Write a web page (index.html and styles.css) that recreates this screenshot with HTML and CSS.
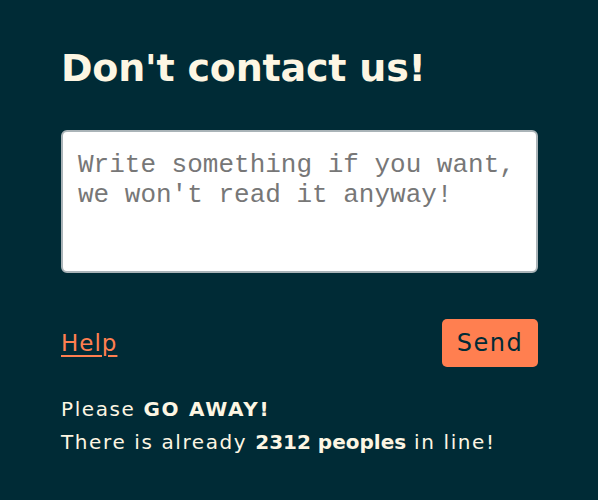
FILE: index.html
```html
<!DOCTYPE html>
<html lang="en">
<head>
<meta charset="utf-8">
<title>Don't contact us!</title>
<link rel="stylesheet" href="styles.css">
</head>
<body>
<main class="page">
  <h1 class="title">Don't contact us!</h1>
  <textarea class="message" placeholder="Write something if you want, we won't read it anyway!"></textarea>
  <div class="actions">
    <a class="help" href="#">Help</a>
    <button class="send" type="button">Send</button>
  </div>
  <div class="notes">
    <p class="note">Please <strong class="shout">GO AWAY!</strong></p>
    <p class="note">There is already <strong>2312 peoples</strong> in line!</p>
  </div>
</main>
</body>
</html>
```

FILE: styles.css
```css
html, body {
  margin: 0;
  padding: 0;
  background: #002b36;
}

body {
  font-family: "DejaVu Sans", "Open Sans", sans-serif;
  color: #fdf6e3;
}

.page {
  display: flex;
  flex-direction: column;
  padding: 44px 60px 0 61px;
  box-sizing: border-box;
  width: 598px;
}

.title {
  margin: 0;
  font-size: 38px;
  line-height: 48px;
  font-weight: 700;
  letter-spacing: -0.2px;
}

.message {
  margin-top: 38px;
  height: 143px;
  box-sizing: border-box;
  width: 100%;
  border: 2px solid #aab4b8;
  border-radius: 6px;
  background: #ffffff;
  padding: 19px 15px;
  font-family: "Liberation Mono", "Courier New", monospace;
  font-size: 26px;
  line-height: 29.5px;
  resize: none;
  color: #333;
}

.message::placeholder {
  color: #777777;
}

.actions {
  margin-top: 46px;
  display: flex;
  justify-content: space-between;
  align-items: center;
  height: 48px;
}

.help {
  color: #ff7f50;
  font-size: 23px;
  letter-spacing: 1px;
  text-decoration: underline;
  text-underline-offset: 4px;
  text-decoration-thickness: 2px;
}

.send {
  height: 48px;
  width: 96px;
  padding: 0;
  border: none;
  border-radius: 5px;
  background: #ff7f50;
  color: #002b36;
  font-family: "DejaVu Sans", "Open Sans", sans-serif;
  font-size: 24px;
  letter-spacing: 1.5px;
}

.notes {
  margin-top: 26px;
}

.note {
  margin: 0;
  font-size: 20px;
  line-height: 33px;
  letter-spacing: 1.6px;
}

.note strong {
  font-weight: 700;
  letter-spacing: 0;
}

.note .shout {
  letter-spacing: 1.7px;
}
```
